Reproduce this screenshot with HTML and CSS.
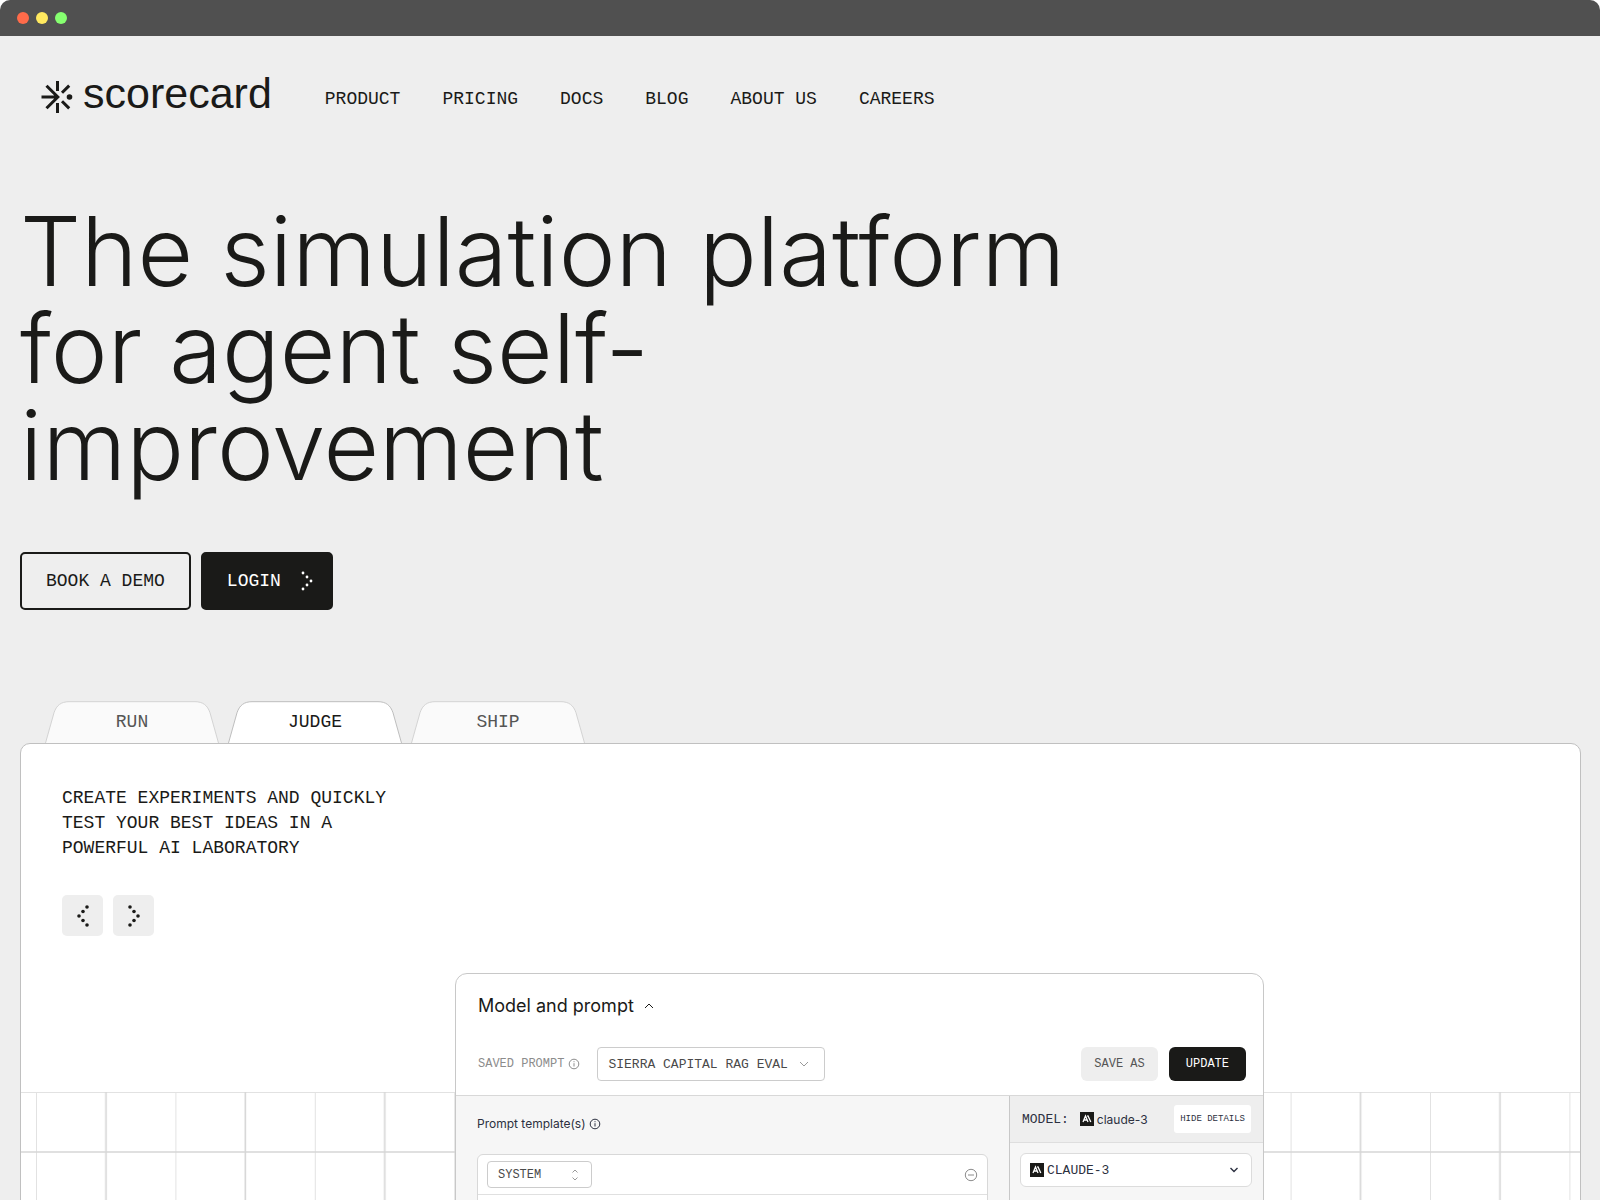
FILE: index.html
```html
<!DOCTYPE html>
<html lang="en">
<head>
    <meta charset="UTF-8">
    <meta name="viewport" content="width=device-width, initial-scale=1.0">
    <title>Scorecard</title>
    <link rel="stylesheet" href="styles.css">
</head>
<body>
    <div class="browser">
        <div class="browser-bar">
            <span class="dot dot-red"></span>
            <span class="dot dot-yellow"></span>
            <span class="dot dot-green"></span>
        </div>

        <header class="site-header">
            <a href="#" class="logo">
                <svg class="logo-mark" viewBox="0 0 32 34" fill="none" stroke="currentColor" stroke-width="3">
                    <path d="M16.500 1v10M16.500 23v10M.5 17h16M5.500 5.800L16.800 17 5.500 28.200M21 12.800l7.200-7.200M21 21.200l7.200 7.200"/>
                    <circle cx="28.500" cy="17" r="2.800" fill="currentColor" stroke="none"/>
                </svg>
                <span>scorecard</span>
            </a>
            <nav class="site-nav">
                <a href="#">PRODUCT</a>
                <a href="#">PRICING</a>
                <a href="#">DOCS</a>
                <a href="#">BLOG</a>
                <a href="#">ABOUT US</a>
                <a href="#">CAREERS</a>
            </nav>
        </header>

        <main class="content">
            <h1>The simulation platform for agent self-improvement</h1>

            <div class="actions">
                <a href="#" class="btn btn-outline">BOOK A DEMO</a>
                <a href="#" class="btn btn-dark">LOGIN
                    <svg class="dots-icon" viewBox="0 0 12 20" fill="currentColor">
                        <circle cx="2" cy="2" r="1.400"/><circle cx="6" cy="6" r="1.400"/><circle cx="10" cy="10" r="1.400"/><circle cx="6" cy="14" r="1.400"/><circle cx="2" cy="18" r="1.400"/>
                    </svg>
                </a>
            </div>

            <div class="tabs" role="tablist">
                <button class="tab" role="tab">
                    <svg class="tab-shape" viewBox="0 0 174 43" preserveAspectRatio="none"><path d="M.5 43L9 12C11.500 4.500 16 .7 24 .7H150C158 .7 162.500 4.500 165 12L173.500 43"/></svg>
                    <span>RUN</span>
                </button>
                <button class="tab tab-active" role="tab" aria-selected="true">
                    <svg class="tab-shape" viewBox="0 0 174 43" preserveAspectRatio="none"><path d="M.5 43L9 12C11.500 4.500 16 .7 24 .7H150C158 .7 162.500 4.500 165 12L173.500 43"/></svg>
                    <span>JUDGE</span>
                </button>
                <button class="tab" role="tab">
                    <svg class="tab-shape" viewBox="0 0 174 43" preserveAspectRatio="none"><path d="M.5 43L9 12C11.500 4.500 16 .7 24 .7H150C158 .7 162.500 4.500 165 12L173.500 43"/></svg>
                    <span>SHIP</span>
                </button>
            </div>

            <section class="panel">
                <div class="intro">
                    <p>CREATE EXPERIMENTS AND QUICKLY TEST YOUR BEST IDEAS IN A POWERFUL AI LABORATORY</p>
                    <div class="arrows">
                        <button class="arrow" aria-label="Previous">
                            <svg viewBox="0 0 14 22" fill="currentColor">
                                <circle cx="11" cy="2" r="1.800"/><circle cx="7" cy="6.500" r="1.800"/><circle cx="3" cy="11" r="1.800"/><circle cx="7" cy="15.500" r="1.800"/><circle cx="11" cy="20" r="1.800"/>
                            </svg>
                        </button>
                        <button class="arrow" aria-label="Next">
                            <svg viewBox="0 0 14 22" fill="currentColor">
                                <circle cx="3" cy="2" r="1.800"/><circle cx="7" cy="6.500" r="1.800"/><circle cx="11" cy="11" r="1.800"/><circle cx="7" cy="15.500" r="1.800"/><circle cx="3" cy="20" r="1.800"/>
                            </svg>
                        </button>
                    </div>
                </div>

                <div class="stage">
                    <svg class="stage-grid" aria-hidden="true">
                        <defs>
                            <pattern id="grid" width="139.400" height="120" x="15" patternUnits="userSpaceOnUse">
                                <path d="M.5 0V120M0 .5H139.400" stroke="#e2e2e2" fill="none"/>
                                <path d="M70 0V120M0 60H139.400" stroke="#d6d6d6" stroke-width="1.600" fill="none"/>
                            </pattern>
                        </defs>
                        <rect width="100%" height="100%" fill="url(#grid)"/>
                    </svg>

                    <div class="window">
                        <div class="window-top">
                            <h2>Model and prompt
                                <svg class="caret" viewBox="0 0 10 6" fill="none" stroke="currentColor"><path d="M1 5l4-4 4 4"/></svg>
                            </h2>
                            <div class="toolbar">
                                <label for="saved">SAVED PROMPT
                                    <svg class="info" viewBox="0 0 12 12" fill="none" stroke="currentColor"><circle cx="6" cy="6" r="4.800"/><path d="M6 5.200v3.300M6 3.200v1"/></svg>
                                </label>
                                <div class="select select-saved">
                                    <select id="saved"><option>SIERRA CAPITAL RAG EVAL</option></select>
                                    <svg class="caret" viewBox="0 0 10 6" fill="none" stroke="currentColor"><path d="M1 1l4 4 4-4"/></svg>
                                </div>
                                <div class="toolbar-buttons">
                                    <button class="small-btn">SAVE AS</button>
                                    <button class="small-btn small-btn-dark">UPDATE</button>
                                </div>
                            </div>
                        </div>

                        <div class="window-body">
                            <div class="prompts">
                                <h3>Prompt template(s)
                                    <svg class="info" viewBox="0 0 12 12" fill="none" stroke="currentColor"><circle cx="6" cy="6" r="4.800"/><path d="M6 5.200v3.300M6 3.200v1"/></svg>
                                </h3>
                                <div class="template">
                                    <div class="template-head">
                                        <div class="select select-role">
                                            <select aria-label="Role"><option>SYSTEM</option></select>
                                            <svg class="updown" viewBox="0 0 8 12" fill="none" stroke="currentColor"><path d="M1.500 3.500L4 1l2.500 2.500M1.500 8.500L4 11l2.500-2.500"/></svg>
                                        </div>
                                        <button class="remove" aria-label="Remove">
                                            <svg viewBox="0 0 14 14" fill="none" stroke="currentColor"><circle cx="7" cy="7" r="5.700"/><path d="M4 7h6"/></svg>
                                        </button>
                                    </div>
                                </div>
                            </div>

                            <div class="model">
                                <div class="model-head">
                                    <span class="model-label">MODEL:</span>
                                    <svg class="model-icon" viewBox="0 0 14 14"><rect width="14" height="14" fill="#1a1a18"/><path d="M3 10l2.500-6L8 10M4 8h3M7.200 4h.8l2.800 6" fill="none" stroke="#fff" stroke-width="1.300"/></svg>
                                    <span class="model-name">claude-3</span>
                                    <button class="details-btn">HIDE DETAILS</button>
                                </div>
                                <div class="select select-model">
                                    <svg class="model-icon" viewBox="0 0 14 14"><rect width="14" height="14" fill="#1a1a18"/><path d="M3 10l2.500-6L8 10M4 8h3M7.200 4h.8l2.800 6" fill="none" stroke="#fff" stroke-width="1.300"/></svg>
                                    <select aria-label="Model"><option>CLAUDE-3</option></select>
                                    <svg class="caret" viewBox="0 0 10 6" fill="none" stroke="currentColor" stroke-width="1.400"><path d="M1.500 1L5 4.500 8.500 1"/></svg>
                                </div>
                            </div>
                        </div>
                    </div>
                </div>
            </section>
        </main>
    </div>
</body>
</html>
```

FILE: styles.css
```css
:root {
    --ink: #1a1a18;
    --page: #eeeeee;
    --line: #c8c8c8;
    --sans: Inter, "Liberation Sans", sans-serif;
    --mono: "Liberation Mono", monospace;
}

* {
    margin: 0;
    padding: 0;
    box-sizing: border-box;
}

body {
    font-family: var(--mono);
    font-size: 18px;
    color: var(--ink);
    background: #fff;
}

a {
    color: inherit;
    text-decoration: none;
}

button,
select {
    font: inherit;
    color: inherit;
    border: none;
    background: none;
    cursor: pointer;
}

svg {
    display: block;
    flex: none;
}

/* Browser frame */
.browser {
    height: 100vh;
    overflow: hidden;
    background: var(--page);
    border-radius: 10px 10px 0 0;
}

.browser-bar {
    display: flex;
    align-items: center;
    gap: 7px;
    height: 36px;
    padding: 0 17px;
    background: #505050;
}

.dot {
    width: 12px;
    height: 12px;
    border-radius: 50%;
}

.dot-red {
    background: #ff6b4a;
}

.dot-yellow {
    background: #ffe95f;
}

.dot-green {
    background: #86ff70;
}

/* Header */
.site-header {
    display: flex;
    align-items: center;
    gap: 53px;
    padding: 31px 41px 0;
}

.logo {
    display: flex;
    align-items: center;
    gap: 10px;
    font-family: "Liberation Sans", sans-serif;
    font-size: 43px;
    line-height: 52px;
}

.logo-mark {
    width: 32px;
    height: 34px;
    margin-top: 8px;
}

.site-nav {
    display: flex;
    gap: 42px;
    padding-top: 12px;
}

/* Hero */
.content {
    padding: 84px 19px 0 20px;
}

h1 {
    max-width: 1100px;
    font-family: var(--sans);
    font-size: 96px;
    font-weight: 300;
    line-height: 97px;
}

.actions {
    display: flex;
    gap: 10px;
    margin-top: 58px;
}

.btn {
    display: flex;
    align-items: center;
    gap: 20px;
    height: 58px;
    padding: 0 24px;
    border: 2px solid var(--ink);
    border-radius: 5px;
}

.btn-dark {
    padding: 0 18px 0 24px;
    background: var(--ink);
    color: #fff;
}

.dots-icon {
    width: 12px;
    height: 20px;
}

/* Tabs */
.tabs {
    display: flex;
    gap: 9px;
    margin-top: 91px;
    padding-left: 25px;
}

.tab {
    position: relative;
    width: 174px;
    height: 42px;
    color: #555;
}

.tab-shape {
    position: absolute;
    inset: 0;
    width: 100%;
    height: 100%;
    fill: #fafafa;
    stroke: #d2d2d2;
}

.tab span {
    position: relative;
}

.tab-active {
    color: var(--ink);
}

.tab-active .tab-shape {
    fill: #fff;
    stroke: #bdbdbd;
}

/* Panel */
.panel {
    border: 1px solid #c0c0c0;
    border-radius: 10px;
    background: #fff;
    overflow: hidden;
}

.intro {
    padding: 42px 41px 37px;
}

.intro p {
    max-width: 340px;
    line-height: 25px;
}

.arrows {
    display: flex;
    gap: 10px;
    margin-top: 34px;
}

.arrow {
    display: flex;
    align-items: center;
    justify-content: center;
    width: 41px;
    height: 41px;
    border-radius: 5px;
    background: var(--page);
}

.arrow svg {
    width: 14px;
    height: 22px;
}

.stage {
    display: grid;
    grid-template-columns: 434fr 809fr 316fr;
}

.stage-grid {
    grid-area: 1 / 1 / 2 / 4;
    width: 100%;
    height: 480px;
    margin-top: 119px;
}

.window {
    grid-area: 1 / 2 / 2 / 3;
    position: relative;
    display: flex;
    flex-direction: column;
    border: 1px solid var(--line);
    border-radius: 12px;
    background: #fff;
    overflow: hidden;
}

.window-top {
    padding: 19px 17px 14px 22px;
}

.window h2 {
    display: flex;
    align-items: center;
    gap: 10px;
    font-family: var(--sans);
    font-size: 18px;
    font-weight: 400;
    line-height: 26px;
}

.caret {
    width: 10px;
    height: 6px;
}

.info {
    width: 12px;
    height: 12px;
}

.toolbar {
    display: flex;
    align-items: center;
    gap: 17px;
    margin-top: 28px;
}

.toolbar label {
    display: flex;
    align-items: center;
    gap: 4px;
    font-size: 12px;
    color: #8c8c8c;
}

.select {
    display: flex;
    align-items: center;
    border: 1px solid #ccc;
    border-radius: 4px;
    background: #fff;
}

.select select {
    flex: 1;
    min-width: 0;
    appearance: none;
    outline: none;
}

.select-saved {
    width: 228px;
    height: 34px;
    padding: 0 15px 0 10px;
    font-size: 13px;
    color: #4a4a4a;
}

.select-saved .caret {
    color: #999;
}

.toolbar-buttons {
    display: flex;
    gap: 11px;
    margin-left: auto;
}

.small-btn {
    height: 34px;
    padding: 0 13px;
    border-radius: 6px;
    background: var(--page);
    font-size: 12px;
    color: #555;
}

.small-btn-dark {
    padding: 0 17px;
    background: var(--ink);
    color: #fff;
}

.window-body {
    display: grid;
    grid-template-columns: 1fr 254px;
    flex: 1;
    border-top: 1px solid #d8d8d8;
    background: #f6f6f6;
}

.prompts {
    padding: 19px 21px;
}

.prompts h3 {
    display: flex;
    align-items: center;
    gap: 3px;
    font-family: var(--sans);
    font-size: 12px;
    font-weight: 400;
    line-height: 18px;
    color: #2c3040;
}

.template {
    height: 300px;
    margin-top: 21px;
    border: 1px solid #d8d8d8;
    border-radius: 6px;
    background: #fff;
}

.template-head {
    display: flex;
    align-items: center;
    justify-content: space-between;
    padding: 6px 9px;
    border-bottom: 1px solid #e0e0e0;
}

.select-role {
    width: 105px;
    height: 27px;
    padding: 0 12px 0 10px;
    font-size: 12px;
    color: #4a4a4a;
}

.updown {
    width: 8px;
    height: 12px;
    color: #999;
}

.remove svg {
    width: 14px;
    height: 14px;
    color: #8c8c8c;
}

.model {
    border-left: 1px solid var(--line);
}

.model-head {
    display: flex;
    align-items: center;
    gap: 3px;
    height: 47px;
    padding: 0 12px;
    border-bottom: 1px solid #dedede;
    background: var(--page);
    font-size: 13px;
    color: #2c3040;
}

.model-label {
    margin-right: 8px;
}

.model-name {
    font-family: var(--sans);
    font-size: 12px;
}

.model-icon {
    width: 14px;
    height: 14px;
}

.details-btn {
    height: 28px;
    margin-left: auto;
    padding: 0 6px;
    border-radius: 3px;
    background: #fff;
    font-size: 9px;
}

.select-model {
    gap: 3px;
    height: 34px;
    margin: 10px 11px 0 10px;
    padding: 0 12px 0 9px;
    border-color: #dcdcdc;
    border-radius: 6px;
    font-size: 13px;
    color: #2c3040;
}
```
